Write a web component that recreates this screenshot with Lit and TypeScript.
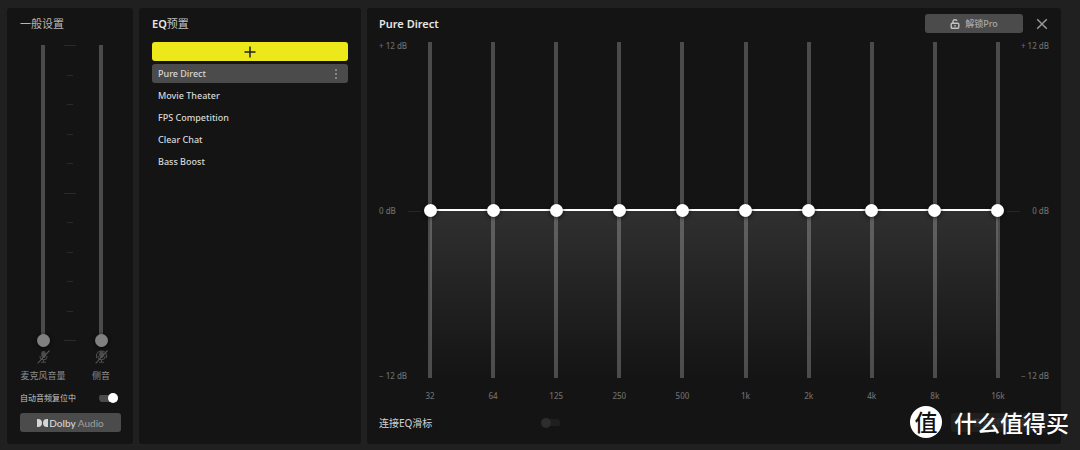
import { LitElement, html, css, svg } from "lit";
import { customElement, property, state } from "lit/decorators.js";
import { classMap } from "lit/directives/class-map.js";

const PRESETS = ["Pure Direct", "Movie Theater", "FPS Competition", "Clear Chat", "Bass Boost"];
const BANDS = ["32", "64", "125", "250", "500", "1k", "2k", "4k", "8k", "16k"];

const micOff = (sidetone: boolean) => svg`
  <g fill="none" stroke="#4a4a4a" stroke-width="1.1" stroke-linecap="round">
    <rect x="4.8" y="1.5" width="3.4" height="6" rx="1.7" fill="#4a4a4a" />
    <path d="M3 6.2c0 4.6 7 4.6 7 0M6.5 9.7V12M4.4 12.3h4.2" />
    ${sidetone ? svg`<path d="M1.6 5.6C1.6-.6 11.4-.6 11.4 5.6M1.5 4.6v3M11.5 4.6v3" />` : ""}
    <path d="M1 13 12.2.8" stroke="#5c5c5c" />
  </g>`;

/** Small on/off switch. */
@customElement("toggle-switch")
export class ToggleSwitch extends LitElement {
  @property({ type: Boolean }) checked = false;
  @property({ type: Boolean }) disabled = false;
  @property() label = "";

  static styles = css`
    :host { display: inline-flex; }
    .switch {
      appearance: none;
      margin: 0;
      width: 19px;
      height: 10px;
      display: flex;
      align-items: center;
      background: linear-gradient(#4b4b4b, #4b4b4b) center / 100% 7px no-repeat;
      border-radius: 5px;
    }
    .switch::before {
      content: "";
      width: 10px;
      height: 10px;
      border-radius: 50%;
      background: #fff;
    }
    .switch:checked { justify-content: flex-end; }
    .switch:disabled { background-image: linear-gradient(#1f1f1f, #1f1f1f); }
    .switch:disabled::before { background: #2d2d2d; }
  `;

  render() {
    return html`<input class="switch" type="checkbox" role="switch" aria-label=${this.label}
      .checked=${this.checked} ?disabled=${this.disabled} />`;
  }
}

@customElement("app-root")
export class AppRoot extends LitElement {
  @state() private selected = PRESETS[0];

  static styles = css`
    :host {
      display: block;
      background: #202020;
      color: #d8d8d8;
      font-family: "Noto Sans", "Noto Sans CJK SC", sans-serif;
      font-size: 10px;
      line-height: 14px;
    }
    * { box-sizing: border-box; }
    button, input { font: inherit; margin: 0; }
    button { border: 0; padding: 0; color: inherit; cursor: pointer; }
    .page {
      position: relative;
      display: flex;
      gap: 6px;
      height: 100vh;
      min-height: 360px;
      padding: 8px 19px 6px 7px;
    }
    .panel {
      background: #141414;
      border-radius: 3px;
      padding: 6px 12px 12px 13px;
      display: flex;
      flex-direction: column;
    }
    .general { flex: 0 0 126px; }
    .presets { flex: 0 0 222px; padding-right: 13px; }
    .equalizer { flex: 1; min-width: 0; padding-left: 12px; }
    .head {
      display: flex;
      align-items: center;
      height: 19px;
      margin-bottom: 9px;
      gap: 13px;
    }
    .title { margin: 0; font-size: 11px; font-weight: 600; color: #e6e6e6; flex: 1; }
    .title.soft { font-weight: 400; color: #b5b5b5; }
    .cjk { font-weight: 400; color: #c0c0c0; }
    .gray {
      height: 19px;
      border-radius: 3px;
      background: #4b4b4b;
      color: #a8a8a8;
      font-size: 9px;
      font-weight: 500;
      display: flex;
      align-items: center;
      justify-content: center;
      gap: 5px;
    }

    .fader {
      appearance: none;
      writing-mode: vertical-lr;
      direction: rtl;
      width: 14px;
      height: 100%;
      min-height: 0;
      background: linear-gradient(#4b4b4b, #4b4b4b) center / 4px 100% no-repeat;
    }
    .fader::-webkit-slider-thumb {
      appearance: none;
      width: 13px;
      height: 13px;
      border-radius: 50%;
      background: #808080;
      box-shadow: 0 1px 4px #000a;
    }
    .levels {
      flex: 1;
      min-height: 0;
      display: grid;
      grid-template-columns: 46px 8px 38px;
      grid-template-rows: minmax(0, 1fr) 19px 20px;
      justify-items: center;
      align-items: center;
      padding-top: 3px;
    }
    .side { margin-left: 16px; }
    .ticks {
      align-self: stretch;
      display: flex;
      flex-direction: column;
      justify-content: space-between;
      align-items: center;
      padding-bottom: 6px;
    }
    .tick { width: 6px; height: 1px; background: #2a2a2a; }
    .tick.major { width: 12px; }
    .levels label { white-space: nowrap; color: #8e8e8e; font-size: 9px; }
    .auto {
      display: flex;
      align-items: center;
      justify-content: space-between;
      height: 14px;
      margin: 5px 3px 8px 0;
      font-size: 8px;
      color: #c8c8c8;
    }
    .dolby { gap: 1px; color: #a0a0a0; font-family: "Lato", sans-serif; font-weight: 400; font-size: 10px; }
    .dolby b { color: #cfcfcf; font-weight: 600; }
    .dolby .name { white-space: pre; }

    .add {
      height: 19px;
      border-radius: 3px;
      background: #ece81a;
      display: flex;
      align-items: center;
      justify-content: center;
      margin-bottom: 3px;
    }
    .list { list-style: none; margin: 0; padding: 0; display: grid; gap: 3px; font-size: 9px; font-weight: 500; }
    .item {
      display: flex;
      align-items: center;
      height: 19px;
      border-radius: 3px;
    }
    .item.on { background: #4b4b4b; }
    .pick { flex: 1; height: 19px; padding-left: 6px; text-align: left; background: none; }
    .more { width: 24px; height: 19px; background: none; display: grid; place-items: center; }

    .unlock { width: 98px; }
    .close { background: none; width: 12px; height: 12px; margin-right: 1px; }
    .close svg, .add svg { display: block; }
    .chart {
      flex: 1;
      min-height: 0;
      display: grid;
      grid-template-columns: 44px minmax(0, 1fr) 44px;
      grid-template-rows: minmax(0, 1fr) 14px;
      row-gap: 11px;
      color: #6c6c6c;
      font-size: 8px;
      font-weight: 500;
      line-height: 8px;
    }
    .scale { display: flex; flex-direction: column; justify-content: space-between; margin-bottom: -2px; }
    .scale .zero { display: flex; align-items: center; justify-content: space-between; }
    .scale .zero::after { content: ""; width: 13px; height: 1px; margin-right: 2px; background: #262626; }
    .scale.right { text-align: right; }
    .scale.right .zero { flex-direction: row-reverse; }
    .scale.right .zero::after { margin: 0 0 0 2px; }
    .bands { display: flex; justify-content: space-between; min-height: 0; }
    .plot {
      background:
        linear-gradient(#fff, #fff) center / calc(100% - 14px) 2px no-repeat,
        linear-gradient(#303030, #141414) bottom / calc(100% - 14px) 50% no-repeat;
    }
    .plot .fader {
      background-image: linear-gradient(#ffffff3c, #ffffff3c);
    }
    .plot .fader::-webkit-slider-thumb { background: #fff; }
    .freqs { grid-column: 2; align-items: center; }
    .freqs label { width: 14px; display: flex; justify-content: center; }
    .foot { display: flex; align-items: center; height: 19px; margin-top: 10px; gap: 109px; color: #d0d0d0; }
    .reset { margin-left: auto; width: 98px; background: #1f1f1f; color: #383838; }

    .mark {
      position: absolute;
      right: 11px;
      bottom: 12px;
      display: flex;
      align-items: center;
      gap: 12px;
      color: #fff;
      font: 500 23px/32px "Noto Sans CJK SC", sans-serif;
    }
    .seal {
      width: 32px;
      height: 32px;
      border-radius: 50%;
      background: #fff;
      color: #111;
      text-align: center;
      font-size: 23px;
      line-height: 31px;
    }
  `;

  render() {
    return html`
      <main class="page">
        <section class="panel general">
          <div class="head"><h2 class="title soft">一般设置</h2></div>
          <div class="levels">
            <input class="fader" id="mic" type="range" min="0" max="100" value="0" />
            <div class="ticks">
              ${Array.from({ length: 11 }, (_, i) => html`<span class=${classMap({ tick: true, major: i % 5 === 0 })}></span>`)}
            </div>
            <input class="fader side" id="side" type="range" min="0" max="100" value="0" />
            <svg width="13" height="14" viewBox="0 0 13 14">${micOff(false)}</svg>
            <span></span>
            <svg class="side" width="13" height="14" viewBox="0 0 13 14">${micOff(true)}</svg>
            <label for="mic">麦克风音量</label>
            <span></span>
            <label class="side" for="side">侧音</label>
          </div>
          <div class="auto">
            <span>自动音频复位中</span>
            <toggle-switch checked label="自动音频复位中"></toggle-switch>
          </div>
          <button class="gray dolby">
            <svg width="11" height="8" viewBox="0 0 11 8" fill="#d6d6d6">
              <path d="M0 0h1a4 4 0 0 1 0 8H0zM11 0h-1a4 4 0 0 0 0 8h1z" />
            </svg>
            <span class="name"><b>Dolby</b> Audio</span>
          </button>
        </section>

        <section class="panel presets">
          <div class="head"><h2 class="title">EQ<span class="cjk">预置</span></h2></div>
          <button class="add" aria-label="+">
            <svg width="12" height="12" viewBox="0 0 12 12" stroke="#222" stroke-width="1.5"><path d="M6 .5v11M.5 6h11" /></svg>
          </button>
          <ul class="list">
            ${PRESETS.map((name) => html`
              <li class=${classMap({ item: true, on: name === this.selected })}>
                <button class="pick" @click=${() => (this.selected = name)}>${name}</button>
                ${name === this.selected
                  ? html`<button class="more" aria-label="⋮">
                      <svg width="2" height="10" viewBox="0 0 2 10" fill="#858585">
                        <path d="M0 0h2v2H0zM0 4h2v2H0zM0 8h2v2H0z" />
                      </svg>
                    </button>`
                  : ""}
              </li>`)}
          </ul>
        </section>

        <section class="panel equalizer">
          <div class="head">
            <h2 class="title">${this.selected}</h2>
            <button class="gray unlock">
              <svg width="10" height="10" viewBox="0 0 10 10" fill="none" stroke="#c4c4c4" stroke-width="1.4">
                <rect x="1.2" y="4.2" width="7.6" height="5" rx="1" /><path d="M3 4V2.6C3 .3 6.6.3 6.9 1.9M5 6v1.6" />
              </svg>
              <span>解锁Pro</span>
            </button>
            <button class="close" aria-label="×">
              <svg width="12" height="12" viewBox="0 0 12 12" stroke="#999" stroke-width="1.5"><path d="M1.2 1.2l9.6 9.6M10.8 1.2l-9.6 9.6" /></svg>
            </button>
          </div>
          <div class="chart">
            <div class="scale"><span>+ 12 dB</span><span class="zero">0 dB</span><span>− 12 dB</span></div>
            <div class="bands plot">
              ${BANDS.map((b) => html`<input class="fader" id="band-${b}" type="range" min="-12" max="12" value="0" />`)}
            </div>
            <div class="scale right"><span>+ 12 dB</span><span class="zero">0 dB</span><span>− 12 dB</span></div>
            <div class="bands freqs">${BANDS.map((b) => html`<label for="band-${b}">${b}</label>`)}</div>
          </div>
          <div class="foot">
            <span>连接EQ滑标</span>
            <toggle-switch disabled label="连接EQ滑标"></toggle-switch>
            <button class="gray reset" disabled>恢复到默认值</button>
          </div>
        </section>

        <div class="mark"><span class="seal">值</span><span>什么值得买</span></div>
      </main>
    `;
  }
}
